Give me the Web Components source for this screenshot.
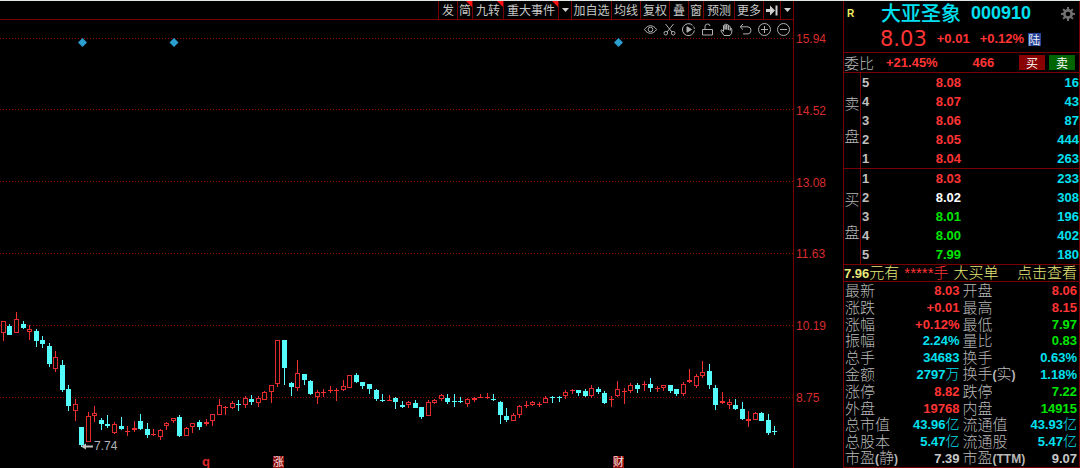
<!DOCTYPE html>
<html lang="zh-CN">
<head>
<meta charset="utf-8">
<title>大亚圣象 000910</title>
<style>
  :root {
    --line: #780000;
    --up: #ff3434;
    --down: #00e600;
    --info: #00e0f0;
    --label: #b8b8b8;
    --note: #e8e87c;
  }
  html, body { margin: 0; background: #000; }
  body { font-family: "Liberation Sans", "Noto Sans CJK SC", sans-serif; color: #c8c8c8; }
</style>
</head>
<body>
<stock-app></stock-app>

<script>
const define = (name, html, setup) => customElements.define(name, class extends HTMLElement {
  connectedCallback() {
    if (this.shadowRoot) return;
    const root = this.attachShadow({ mode: 'open' });
    const t = document.createElement('template');
    t.innerHTML = typeof html === 'function' ? html(this) : html;
    root.append(t.content.cloneNode(true));
    if (setup) setup(this, root);
  }
});

/* One entry of the top toolbar */
define('tool-button', `
<style>
  :host { display: block; box-sizing: border-box; border-left: 1px solid var(--line); position: relative; width: 29px; }
  :host([size="arrow"]) { width: 13px; }
  :host([size="tight"]) { width: 15px; }
  :host([size="icon"]) { width: 17px; }
  :host([size="single"]) { width: 19px; }
  :host([size="wide"]) { width: 31px; }
  :host([size="triple"]) { width: 40px; }
  :host([size="quad"]) { width: 55px; }
  :host([hot])::after { content: ""; position: absolute; top: 0; right: 0; border: 3px solid; border-color: #ff1010 #ff1010 transparent transparent; }
  button { display: flex; align-items: center; justify-content: center; width: 100%; height: 18px; padding: 0; border: 0; background: none; color: inherit; font: 12px/18px "Noto Sans CJK SC", sans-serif; white-space: nowrap; }
</style>
<button type="button"><slot></slot></button>`);

const ICONS = {
  eye: ['显示', '<path d="M.5 6.500C3.500 1.500 9.500 1.500 12.500 6.500C9.500 11.500 3.500 11.500.5 6.500Z"/><circle cx="6.500" cy="6.500" r="2.300"/>'],
  cut: ['剪切', '<path d="M2.500 1L9 9M10.500 1L4 9"/><circle cx="2.800" cy="10.200" r="1.800"/><circle cx="10.200" cy="10.200" r="1.800"/>'],
  replay: ['回放', '<path d="M10.500 2.200A6 6 0 1 0 12.400 7.500M12.400 6A6 6 0 0 0 11.600 3.500"/><path d="M5 3.800L9.500 6.500L5 9.200Z" fill="currentColor"/>'],
  lock: ['锁定', '<path d="M1.500 6.500H11.500V12H1.500ZM4 6.500V3.500Q4 1 6.500 1Q9 1 9 3"/>'],
  hand: ['拖动', '<path d="M4 12.500L1 8Q.5 6.800 1.700 6.800L3.500 8.500V2.500Q4.300 1.600 5 2.500V6.500V1.500Q5.900.5 6.700 1.500V6.500V2Q7.600 1.100 8.400 2V7V3.500Q9.500 2.700 10.200 3.600V7.500V5.500Q11.300 4.800 11.800 5.800V9Q11.500 11 10 12.500Z"/>'],
  undo: ['撤销', '<path d="M4 1L1.200 3.800L4 6.600M1.200 3.800H9Q12 4.200 12 7.300Q12 10.500 9 10.900H4"/>'],
  plus: ['放大', '<circle cx="6.500" cy="6.500" r="6"/><path d="M3 6.500H10M6.500 3V10"/>'],
  minus: ['缩小', '<circle cx="6.500" cy="6.500" r="6"/><path d="M3 6.500H10"/>']
};

define('chart-icon', el => {
  const [label, art] = ICONS[el.getAttribute('name')];
  return `
<style>
  :host { display: block; }
  button { display: grid; place-items: center; width: 19px; height: 18px; padding: 0; border: 0; background: none; color: #b0b0b0; }
  svg { width: 13px; height: 13px; overflow: visible; fill: none; stroke: currentColor; }
</style>
<button type="button" aria-label="${label}"><svg viewBox="0 0 13 13">${art}</svg></button>`;
});

define('chart-toolbar', `
<style>
  :host { display: block; }
  .menu, .icons { display: flex; justify-content: flex-end; }
  .menu { border-bottom: 1px solid var(--line); }
  .down { width: 7px; height: 4px; fill: #d0d0d0; }
  .jump { width: 12px; height: 11px; fill: #d0d0d0; }
</style>
<div class="menu">
  <tool-button size="single">发</tool-button>
  <tool-button size="tight" hot>简</tool-button>
  <tool-button size="wide" hot>九转</tool-button>
  <tool-button size="quad" hot>重大事件</tool-button>
  <tool-button size="arrow"><svg class="down" viewBox="0 0 7 4"><path d="M0 0H7L3.500 4Z"/></svg></tool-button>
  <tool-button size="triple">加自选</tool-button>
  <tool-button>均线</tool-button>
  <tool-button>复权</tool-button>
  <tool-button size="single">叠</tool-button>
  <tool-button size="tight">窗</tool-button>
  <tool-button size="wide">预测</tool-button>
  <tool-button>更多</tool-button>
  <tool-button size="icon"><svg class="jump" viewBox="0 0 12 11"><path d="M0 4H4V.500L9 5.500L4 10.500V7H0ZM9.500.500H11.500V10.500H9.500Z"/></svg></tool-button>
  <tool-button size="arrow"><svg class="down" viewBox="0 0 7 4"><path d="M0 0H7L3.500 4Z"/></svg></tool-button>
</div>
<div class="icons">
  ${Object.keys(ICONS).map(n => `<chart-icon name="${n}"></chart-icon>`).join('')}
</div>`);

/* Candles: direction, high, body top, body bottom, low */
const CANDLES = `r321,321,333,341 c324,326,335,335 r312,319,333,333 c321,324,328,329 r325,329,332,340 c329,331,341,347
c336,340,344,348 c343,346,364,367 r351,357,369,372 c360,365,390,392 c385,389,406,411 r399,404,411,421 c427,427,445,447
r412,416,442,442 r406,413,416,422 c418,420,424,430 c415,424,426,428 r422,424,433,434 c417,426,429,430 r426,431,431,436
r421,428,430,432 c414,421,429,430 c423,429,435,438 r429,434,435,436 r429,430,437,440 r422,423,426,430 r418,418,421,423
c415,417,436,437 r427,428,436,436 r423,423,427,433 c420,422,427,430 r419,422,424,426 r414,414,421,426 r399,405,415,415
r406,407,408,415 r401,403,408,409 c400,404,405,411 r396,398,405,408 c395,399,402,405 r396,398,403,407 r391,392,400,400
r385,385,392,403 r340,340,384,387 c340,340,368,385 c382,383,387,396 r360,373,388,391 c374,374,380,385 c380,381,394,395
r390,392,397,404 r389,392,393,397 r386,390,391,393 r388,390,390,401 r380,386,390,391 r375,375,388,388 c373,375,382,383
c382,382,386,389 c384,384,389,394 c389,390,399,401 c394,400,401,402 r395,400,401,401 c397,398,402,409 c401,405,407,408
r401,402,405,408 c400,403,408,408 c407,407,417,419 r400,402,416,416 r399,400,403,404 r394,395,399,401 c394,398,402,404
c394,401,402,407 c397,401,402,403 r398,399,404,407 r397,398,400,402 r394,397,398,398 r393,397,398,399 c394,399,400,401
c401,402,415,424 c408,416,420,422 r413,415,421,421 r405,406,415,418 r401,405,406,408 r401,402,405,406 r402,404,405,407
r396,398,403,403 c396,397,398,403 c396,397,398,402 r390,392,396,399 r389,390,391,394 c390,390,393,396 c389,391,396,397
r385,388,396,398 c387,389,392,394 c391,393,403,404 r396,399,400,407 r381,389,396,397 r388,391,392,404 r383,385,391,393
c383,385,389,393 r381,384,385,391 c378,384,388,392 r386,388,389,392 r385,385,388,391 c385,385,391,393 c389,389,394,396
r382,384,394,396 r369,380,382,383 r374,376,386,388 r361,372,376,378 c364,371,385,389 c385,388,405,410 r392,401,403,404
r399,402,405,409 c399,405,409,410 c402,409,419,420 r411,419,421,427 r412,413,420,420 c412,413,421,421 c414,420,433,435
c426,431,432,435`.split(/\s+/);

const drawCandle = (spec, i) => {
  const [hi, top, bot, lo] = spec.slice(1).split(',').map(Number);
  const x = Math.floor(3.4 + i * 6.537);
  const h = Math.max(bot - top, 1);
  const end = top + h;
  const hollow = spec[0] === 'r' && h > 2;
  const body = hollow
    ? `<rect class="hollow" x="${x - 1.5}" y="${top + .5}" width="4" height="${h - 1}"/>`
    : `<rect x="${x - 2}" y="${top}" width="5" height="${h}"/>`;
  return `<g class="${spec[0]}">${top > hi ? `<rect x="${x}" y="${hi}" width="1" height="${top - hi}"/>` : ''}${
    lo > end ? `<rect x="${x}" y="${end}" width="1" height="${lo - end}"/>` : ''}${body}</g>`;
};

define('candle-chart', `
<style>
  :host { display: block; }
  svg { display: block; width: 100%; }
  .grid { stroke: #900000; stroke-dasharray: 1 2; }
  .r { fill: #f03030; } .c { fill: #54fcfc; }
  .hollow { fill: #000; stroke: #e02c2c; }
  .mark { fill: #2a9fd0; }
  .tag { fill: #8c0808; }
  text { font-family: "Liberation Sans", "Noto Sans CJK SC", sans-serif; }
</style>
<svg viewBox="0 38 793 430" role="img" aria-label="K线图">
  <g class="grid" shape-rendering="crispEdges">${[38.5, 109.5, 181.5, 253.5, 325.5, 397.5].map(y => `<path d="M0 ${y}H793"/>`).join('')}</g>
  <g class="mark">${[82.5, 174, 618.5].map(x => `<path d="M${x - 4.5} 42.500l4.500-4.500 4.500 4.500-4.500 4.500z"/>`).join('')}</g>
  <g shape-rendering="crispEdges">${CANDLES.map(drawCandle).join('')}</g>
  <path d="M81 446.500l5-3v2h7v2h-7v2z" fill="#c0c0c0"/>
  <text x="94" y="450" font-size="12" fill="#b0b4bc">7.74</text>
  <text x="202" y="466" font-size="13" font-weight="700" fill="#e02828">q</text>
  <rect class="tag" x="273" y="456" width="11" height="12"/><rect class="tag" x="613" y="456" width="11" height="12"/>
  <g font-size="11" fill="#f4e4e4"><text x="273" y="466">涨</text><text x="613" y="466">财</text></g>
</svg>`);

define('price-axis', `
<style>
  :host { display: flex; flex-direction: column; justify-content: space-between; box-sizing: border-box; padding: 30px 0 62px 2px; color: #d82c2c; font-size: 12px; line-height: 16px; }
</style>
${['15.94', '14.52', '13.08', '11.63', '10.19', '8.75'].map(v => `<span>${v}</span>`).join('')}`);

define('quote-header', `
<style>
  :host { display: flex; flex-direction: column; height: 51px; border-bottom: 1px solid var(--line); color: var(--up); }
  .title { display: flex; align-items: center; gap: 8px; height: 25px; padding: 0 4px 0 3px; }
  .flag { color: #f0f060; font-size: 10px; font-weight: 700; width: 26px; box-sizing: border-box; }
  h1 { display: flex; flex: 1; gap: 10px; margin: 0; color: var(--info); font: 700 18px/25px "Liberation Sans"; }
  h1 b { font: 500 20px/23px "Noto Sans CJK SC"; }
  button { padding: 0; border: 0; background: none; height: 14px; }
  svg { display: block; width: 14px; height: 14px; }
  .price { display: flex; align-items: center; height: 26px; padding-left: 36px; gap: 10px; font-size: 13px; font-weight: 700; line-height: 26px; }
  .now { font: 21px/28px "DejaVu Sans"; }
  .change { display: flex; align-items: center; gap: 4px; }
  .hk { background: #24459a; color: #e8e8f0; font: 12px/13px "Noto Sans CJK SC"; height: 13px; width: 13px; }
</style>
<div class="title">
  <span class="flag">R</span>
  <h1><b>大亚圣象</b><span>000910</span></h1>
  <button type="button" aria-label="设置"><svg viewBox="0 0 14 14"><g fill="#707070"><path d="M6 0h2v14h-2zM0 6h14v2h-14zM1.400 2.800l1.400-1.400 9.800 9.800-1.400 1.400zM11.200 1.400l1.400 1.400-9.800 9.800-1.400-1.400z"/><circle cx="7" cy="7" r="5"/></g><circle cx="7" cy="7" r="2.300" fill="#000"/></svg></button>
</div>
<div class="price">
  <span class="now">8.03</span><span>+0.01</span><span class="change">+0.12% <span class="hk">陆</span></span>
</div>`);

define('order-ratio', `
<style>
  :host { display: grid; grid-template-columns: 42px 1fr 1fr auto; align-items: center; height: 19px; border-bottom: 1px solid var(--line); color: var(--up); font-size: 13px; font-weight: 700; line-height: 19px; }
  .name { font: 300 15px/17px "Noto Sans CJK SC"; color: var(--label); }
  .diff { padding-left: 20px; }
  .act { display: flex; gap: 4px; padding-right: 4px; }
  button { width: 26px; height: 15px; padding: 0; border: 0; background: #880000; color: #fff; font: 12px/14px "Noto Sans CJK SC"; }
  .sell { background: #006400; }
</style>
<span class="name">委比</span><span>+21.45%</span><span class="diff">466</span>
<div class="act"><button type="button">买</button><button type="button" class="sell">卖</button></div>`);

/* Five levels of one side of the book */
define('order-book', el => {
  const rows = el.getAttribute('rows').split(';').map(r => r.split(','));
  return `
<style>
  :host { display: grid; grid-template-columns: 17px 1fr; border-bottom: 1px solid var(--line); }
  .side { display: flex; flex-direction: column; justify-content: center; align-items: center; border-right: 1px solid var(--line); padding-bottom: 4px; font: 300 15px/33px "Noto Sans CJK SC"; color: var(--label); }
  table { width: 100%; border-collapse: collapse; font-size: 13px; font-weight: 700; line-height: 19px; }
  th, td { padding: 0; height: 19px; text-align: right; }
  th { width: 20px; padding-left: 1px; text-align: left; color: #c0c0c0; }
  .p { width: 79px; }
  .u { color: var(--up); } .f { color: #fff; } .d { color: var(--down); }
  .v { color: var(--info); }
</style>
<div class="side"><span>${el.getAttribute('side')}</span><span>盘</span></div>
<table><tbody>${rows.map(([n, p, v, k]) => `<tr><th scope="row">${n}</th><td class="p ${k}">${p}</td><td class="v">${v}</td></tr>`).join('')}</tbody></table>`;
});

define('big-order-tip', `
<style>
  :host { display: block; border-bottom: 1px solid var(--line); }
  a { display: flex; gap: 5px; height: 16px; padding-right: 2px; color: var(--note); text-decoration: none; white-space: nowrap; font: 300 15px/16px "Liberation Sans", "Noto Sans CJK SC"; }
  b { font-size: 13px; font-weight: 700; }
  .hand { color: var(--up); }
  .more { margin-left: auto; }
</style>
<a href="#"><span><b>7.96</b>元有</span><span class="hand">*****手</span><span>大买单</span><span class="more">点击查看</span></a>`);

const STATS = [
  ['最新', '8.03', 'u', '开盘', '8.06', 'u'],
  ['涨跌', '+0.01', 'u', '最高', '8.15', 'u'],
  ['涨幅', '+0.12%', 'u', '最低', '7.97', 'd'],
  ['振幅', '2.24%', 'i', '量比', '0.83', 'd'],
  ['总手', '34683', 'i', '换手', '0.63%', 'i'],
  ['金额', '2797万', 'i', '换手(实)', '1.18%', 'i'],
  ['涨停', '8.82', 'u', '跌停', '7.22', 'd'],
  ['外盘', '19768', 'u', '内盘', '14915', 'd'],
  ['总市值', '43.96亿', 'i', '流通值', '43.93亿', 'i'],
  ['总股本', '5.47亿', 'i', '流通股', '5.47亿', 'i'],
  ['市盈(静)', '7.39', 'n', '市盈(TTM)', '9.07', 'n']
];
const unit = v => v.replace(/[万亿]/, m => `<span>${m}</span>`);
const name = v => v.replace(/[(TM)]+/g, m => `<b>${m}</b>`);

define('stat-table', `
<style>
  :host { display: grid; flex: 1; border-bottom: 1px solid var(--line); }
  table { width: 100%; height: 100%; border-collapse: collapse; table-layout: fixed; line-height: 15px; }
  th, td { padding: 0 2px 0 1px; white-space: nowrap; }
  th { text-align: left; color: var(--label); font: 300 15px/1px "Liberation Sans", "Noto Sans CJK SC"; width: 64px; }
  th b { font-size: 12px; font-weight: 700; }
  td { text-align: right; font-size: 13px; font-weight: 700; }
  td span { font: 300 14px/1px "Liberation Sans", "Noto Sans CJK SC"; }
  .u { color: var(--up); } .d { color: var(--down); } .i { color: var(--info); } .n { color: #c8c8c8; }
</style>
<table><tbody>${STATS.map(([a, b, c, d, e, f]) => `<tr><th scope="row">${name(a)}</th><td class="${c}">${unit(b)}</td><th scope="row">${name(d)}</th><td class="${f}">${unit(e)}</td></tr>`).join('')}</tbody></table>`);

define('quote-panel', `
<style>
  :host { display: flex; flex-direction: column; box-sizing: border-box; border: solid var(--line); border-width: 0 1px; }
</style>
<quote-header></quote-header>
<order-ratio></order-ratio>
<order-book side="卖" rows="5,8.08,16,u;4,8.07,43,u;3,8.06,87,u;2,8.05,444,u;1,8.04,263,u"></order-book>
<order-book side="买" rows="1,8.03,233,u;2,8.02,308,f;3,8.01,196,d;4,8.00,402,d;5,7.99,180,d"></order-book>
<big-order-tip></big-order-tip>
<stat-table></stat-table>`);

define('stock-app', `
<style>
  :host { display: grid; grid-template-columns: 1fr 49px 237px; box-sizing: border-box; min-height: 100vh; border-top: 1px solid #dfe6e3; }
  main { border-right: 1px solid var(--line); min-width: 0; }
</style>
<main>
  <chart-toolbar></chart-toolbar>
  <candle-chart></candle-chart>
</main>
<price-axis></price-axis>
<quote-panel></quote-panel>`);
</script>
</body>
</html>
